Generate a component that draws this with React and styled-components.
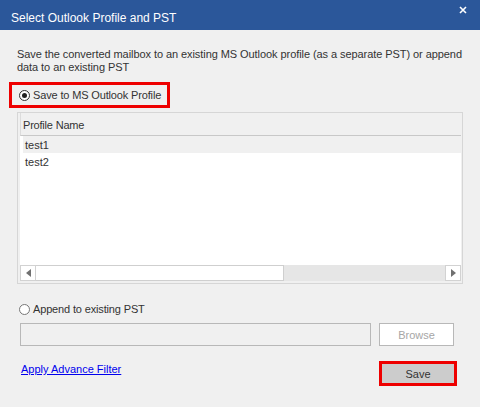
import React from "react";
import styled, { createGlobalStyle } from "styled-components";

const Global = createGlobalStyle`
  html, body { margin: 0; padding: 0; background: #f0f0f0; }
  body { font-family: "Liberation Sans", Arial, sans-serif; }
`;

const Window = styled.div`
  width: 480px;
  height: 407px;
  background: #f0f0f0;
  display: flex;
  flex-direction: column;
  overflow: hidden;
  color: #333;
  font-size: 11px;
`;

const TitleBar = styled.div`
  height: 30px;
  box-sizing: border-box;
  background: #2b579a;
  color: #fff;
  display: flex;
  align-items: center;
  justify-content: space-between;
  padding: 0 13px 0 11px;
  font-size: 12px;
`;

const TitleText = styled.span`
  margin-top: 5px;
`;

const Close = styled.svg`
  width: 8px;
  height: 8px;
  margin-top: -10px;
`;

const Body = styled.div`
  display: flex;
  flex-direction: column;
  padding: 0 17px;
`;

const Description = styled.p`
  margin: 18px -5px 0 0;
  line-height: 13px;
  font-size: 11px;
  letter-spacing: -0.07px;
`;

const OptionBox = styled.div`
  margin: 8px 0 0 -8px;
  width: 161px;
  height: 26px;
  box-sizing: border-box;
  border: 3px solid #ee0000;
  display: flex;
  align-items: center;
  padding-left: 7px;
`;

const RadioLabel = styled.label`
  display: flex;
  align-items: center;
  gap: 3px;
  font-size: 11px;
  line-height: 13px;
  color: #333;
  white-space: nowrap;
  letter-spacing: -0.15px;
`;

const RadioCircle = styled.span`
  width: 11px;
  height: 11px;
  box-sizing: border-box;
  border-radius: 50%;
  border: 1px solid ${(p) => (p.$checked ? "#333" : "#777")};
  background: #fff;
  display: flex;
  align-items: center;
  justify-content: center;
  &::after {
    content: "";
    width: 5px;
    height: 5px;
    border-radius: 50%;
    background: ${(p) => (p.$checked ? "#222" : "transparent")};
  }
`;

const ListFrame = styled.div`
  margin-top: 4px;
  height: 172px;
  box-sizing: border-box;
  border: 1px solid #d6d6d6;
  padding: 0 1px 1px 2px;
  display: flex;
  flex-direction: column;
`;

const ListHeader = styled.div`
  height: 23px;
  box-sizing: border-box;
  background: #f0f0f0;
  border-bottom: 1px solid #c8c8c8;
  border-left: 1px solid #dcdcdc;
  display: flex;
  align-items: center;
  padding: 2px 0 0 2px;
  font-size: 11px;
  letter-spacing: -0.2px;
`;

const ListBody = styled.div`
  flex: 1;
  background: #fff;
  display: flex;
  flex-direction: column;
  padding-left: 3px;
`;

const Row = styled.div`
  height: 17px;
  display: flex;
  align-items: center;
  padding: 1px 0 0 2px;
  box-sizing: border-box;
  background: ${(p) => (p.$selected ? "#f0f0f0" : "#fff")};
`;

const ScrollBar = styled.div`
  height: 16px;
  background: #e6e6e6;
  display: flex;
  margin-bottom: 1px;
`;

const ArrowBtn = styled.div`
  width: 16px;
  box-sizing: border-box;
  border: 1px solid #d2d2d2;
  background: #fff;
  display: flex;
  align-items: center;
  justify-content: center;
`;

const Thumb = styled.div`
  width: 248px;
  box-sizing: border-box;
  border: 1px solid #cfcfcf;
  border-left: none;
  background: #fff;
`;

const Track = styled.div`
  flex: 1;
`;

const AppendRow = styled.div`
  margin-top: 19px;
  padding-left: 2px;
`;

const PathRow = styled.div`
  display: flex;
  margin-top: 7px;
  padding-left: 3px;
  gap: 8px;
`;

const PathInput = styled.div`
  width: 351px;
  height: 23px;
  box-sizing: border-box;
  border: 1px solid #b8b8b8;
  background: #f0f0f0;
`;

const BrowseBtn = styled.div`
  width: 75px;
  height: 23px;
  box-sizing: border-box;
  border: 1px solid #b8b8b8;
  background: #fff;
  color: #a6a6a6;
  display: flex;
  align-items: center;
  justify-content: center;
  font-size: 11px;
`;

const FooterRow = styled.div`
  display: flex;
  justify-content: space-between;
  align-items: flex-start;
  margin-top: 15px;
  padding-left: 4px;
  padding-right: 6px;
`;

const Link = styled.a`
  color: #0000ee;
  text-decoration: underline;
  font-size: 11px;
  line-height: 13px;
  margin-top: 2px;
  cursor: pointer;
`;

const SaveBtn = styled.div`
  width: 78px;
  height: 25px;
  box-sizing: border-box;
  border: 3px solid #ee0000;
  background: #cccccc;
  color: #333;
  display: flex;
  align-items: center;
  justify-content: center;
  font-size: 11px;
`;

export default function App() {
  return (
    <>
      <Global />
      <Window>
        <TitleBar>
          <TitleText>Select Outlook Profile and PST</TitleText>
          <Close viewBox="0 0 8 8">
            <path d="M1 1 L7 7 M7 1 L1 7" stroke="#fff" strokeWidth="1.6" />
          </Close>
        </TitleBar>
        <Body>
          <Description>
            Save the converted mailbox to an existing MS Outlook profile (as a separate PST) or append data to an existing PST
          </Description>
          <OptionBox>
            <RadioLabel>
              <RadioCircle $checked />
              Save to MS Outlook Profile
            </RadioLabel>
          </OptionBox>
          <ListFrame>
            <ListHeader>Profile Name</ListHeader>
            <ListBody>
              <Row $selected>test1</Row>
              <Row>test2</Row>
            </ListBody>
            <ScrollBar>
              <ArrowBtn>
                <svg width="5" height="8" viewBox="0 0 5 8">
                  <path d="M5 0 L0 4 L5 8 Z" fill="#707070" />
                </svg>
              </ArrowBtn>
              <Thumb />
              <Track />
              <ArrowBtn>
                <svg width="5" height="8" viewBox="0 0 5 8">
                  <path d="M0 0 L5 4 L0 8 Z" fill="#707070" />
                </svg>
              </ArrowBtn>
            </ScrollBar>
          </ListFrame>
          <AppendRow>
            <RadioLabel>
              <RadioCircle />
              Append to existing PST
            </RadioLabel>
          </AppendRow>
          <PathRow>
            <PathInput />
            <BrowseBtn>Browse</BrowseBtn>
          </PathRow>
          <FooterRow>
            <Link>Apply Advance Filter</Link>
            <SaveBtn>Save</SaveBtn>
          </FooterRow>
        </Body>
      </Window>
    </>
  );
}
